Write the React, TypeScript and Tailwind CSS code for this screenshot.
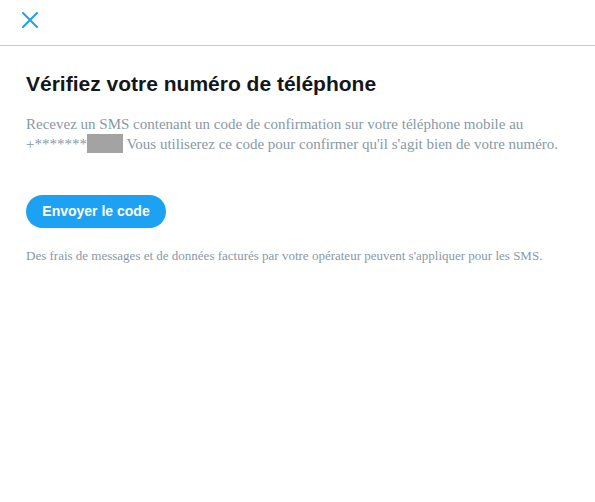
import React from "react";

export default function App() {
  return (
    <div className="w-[595px] h-[502px] bg-white flex flex-col">
      <div className="h-[46px] border-b border-[#c4ced6] flex items-center pl-[21px] shrink-0">
        <svg width="18" height="18" viewBox="0 0 18 18" className="mt-[-5px]">
          <path d="M2 2 L16 16 M16 2 L2 16" stroke="#1da1f2" strokeWidth="2" strokeLinecap="round" />
        </svg>
      </div>
      <div className="px-[26px] pt-[24px] flex flex-col">
        <h1 className="text-[21px] leading-[28px] font-bold text-[#14171a] [font-family:'Liberation_Sans',Arial,sans-serif]">
          Vérifiez votre numéro de téléphone
        </h1>
        <p className="mt-[16px] text-[15px] leading-[20px] text-[#8899a6] [font-family:'Liberation_Serif','Times_New_Roman',serif]">
          Recevez un SMS contenant un code de confirmation sur votre téléphone mobile au
          <br />
          +*******
          <span className="inline-block w-[36px] h-[19px] bg-[#a3a3a3] align-[-4px]"></span> Vous utiliserez ce code pour confirmer qu'il s'agit bien de votre numéro.
        </p>
        <div className="mt-[41px] flex">
          <button className="h-[33px] w-[140px] whitespace-nowrap rounded-full bg-[#1da1f2] text-white text-[14px] font-bold [font-family:'Liberation_Sans',Arial,sans-serif] flex items-center justify-center">
            Envoyer le code
          </button>
        </div>
        <p className="mt-[20px] text-[13px] leading-[16px] text-[#8899a6] [font-family:'Liberation_Serif','Times_New_Roman',serif]">
          Des frais de messages et de données facturés par votre opérateur peuvent s'appliquer pour les SMS.
        </p>
      </div>
    </div>
  );
}
